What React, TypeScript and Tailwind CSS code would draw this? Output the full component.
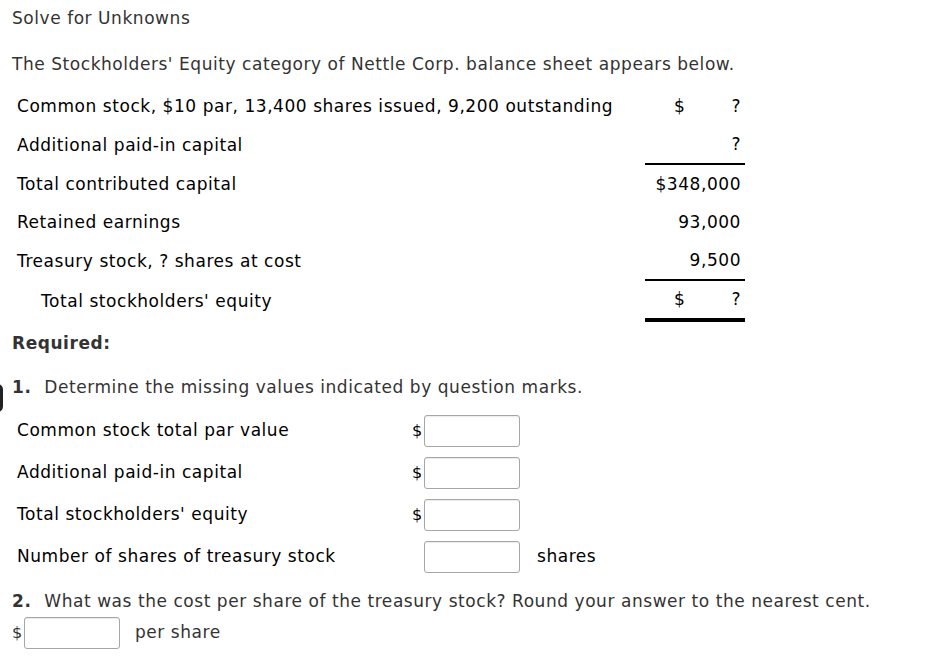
import React from "react";

const font = { fontFamily: "Verdana, 'DejaVu Sans', sans-serif" };

const rows = [
  { label: "Common stock, $10 par, 13,400 shares issued, 9,200 outstanding", dollar: true, value: "?", h: "h-[38px]", border: "" },
  { label: "Additional paid-in capital", dollar: false, value: "?", h: "h-[40px]", border: "border-b-2 border-black" },
  { label: "Total contributed capital", dollar: false, value: "$348,000", h: "h-[38px]", border: "" },
  { label: "Retained earnings", dollar: false, value: "93,000", h: "h-[38px]", border: "" },
  { label: "Treasury stock, ? shares at cost", dollar: false, value: "9,500", h: "h-[40px]", border: "border-b-2 border-black" },
];

function Box() {
  return (
    <input
      type="text"
      className="h-[32px] w-[96px] rounded-[3px] border border-[#a6a6a6] bg-white shadow-[inset_0_1px_1px_rgba(0,0,0,0.08)] outline-none"
    />
  );
}

export default function App() {
  const answers = [
    { label: "Common stock total par value", dollar: true, suffix: "" },
    { label: "Additional paid-in capital", dollar: true, suffix: "" },
    { label: "Total stockholders' equity", dollar: true, suffix: "" },
    { label: "Number of shares of treasury stock", dollar: false, suffix: "shares" },
  ];

  return (
    <div
      className="relative min-h-[662px] w-[926px] bg-white text-[17px] tracking-[0.55px] text-[#333]"
      style={font}
    >
      {/* edge marker */}
      <div className="absolute left-[-8px] top-[384px] h-[28px] w-[11px] rounded-full border-[3px] border-[#222]" />

      <div className="px-[12px] pt-[7px]">
        <p className="h-[22px] leading-[22px]">Solve for Unknowns</p>
        <p className="mt-[24px] h-[22px] leading-[22px]">
          The Stockholders' Equity category of Nettle Corp. balance sheet appears below.
        </p>

        {/* balance sheet */}
        <div className="mt-[12px] w-[733px] text-black">
          {rows.map((r) => (
            <div key={r.label} className={`grid ${r.h} grid-cols-[1fr_100px] items-stretch`}>
              <div className="flex items-center pl-[5px] pt-[2px]">{r.label}</div>
              <div
                className={`flex items-center pr-[4px] pt-[2px] ${r.border} ${
                  r.dollar ? "justify-between pl-[29px]" : "justify-end"
                }`}
              >
                {r.dollar && <span>$</span>}
                <span>{r.value}</span>
              </div>
            </div>
          ))}
          <div className="grid h-[41px] grid-cols-[1fr_100px] items-stretch">
            <div className="flex items-center pl-[29px] pt-[1px]">Total stockholders' equity</div>
            <div className="flex items-center justify-between border-b-4 border-black pl-[29px] pr-[4px] pt-[1px]">
              <span>$</span>
              <span>?</span>
            </div>
          </div>
        </div>

        <p className="mt-[10px] h-[22px] font-bold leading-[22px]">Required:</p>

        <p className="mt-[22px] h-[22px] leading-[22px]">
          <span className="mr-[7px] font-bold">1.</span> Determine the missing values indicated by question marks.
        </p>

        <div className="mt-[17px] flex flex-col gap-[10px] text-black">
          {answers.map((a) => (
            <div key={a.label} className="flex h-[32px] items-center">
              <div className="w-[400px] pl-[5px]">{a.label}</div>
              <div className="w-[12px] text-[16px] tracking-normal">{a.dollar ? "$" : ""}</div>
              <Box />
              {a.suffix && <span className="ml-[17px]">{a.suffix}</span>}
            </div>
          ))}
        </div>

        <p className="mt-[17px] h-[22px] leading-[22px]">
          <span className="mr-[7px] font-bold">2.</span> What was the cost per share of the treasury stock? Round your
          answer to the nearest cent.
        </p>

        <div className="mt-[5px] flex h-[32px] items-center">
          <span className="w-[12px] text-[16px] tracking-normal">$</span>
          <Box />
          <span className="ml-[15px]">per share</span>
        </div>
      </div>
    </div>
  );
}
